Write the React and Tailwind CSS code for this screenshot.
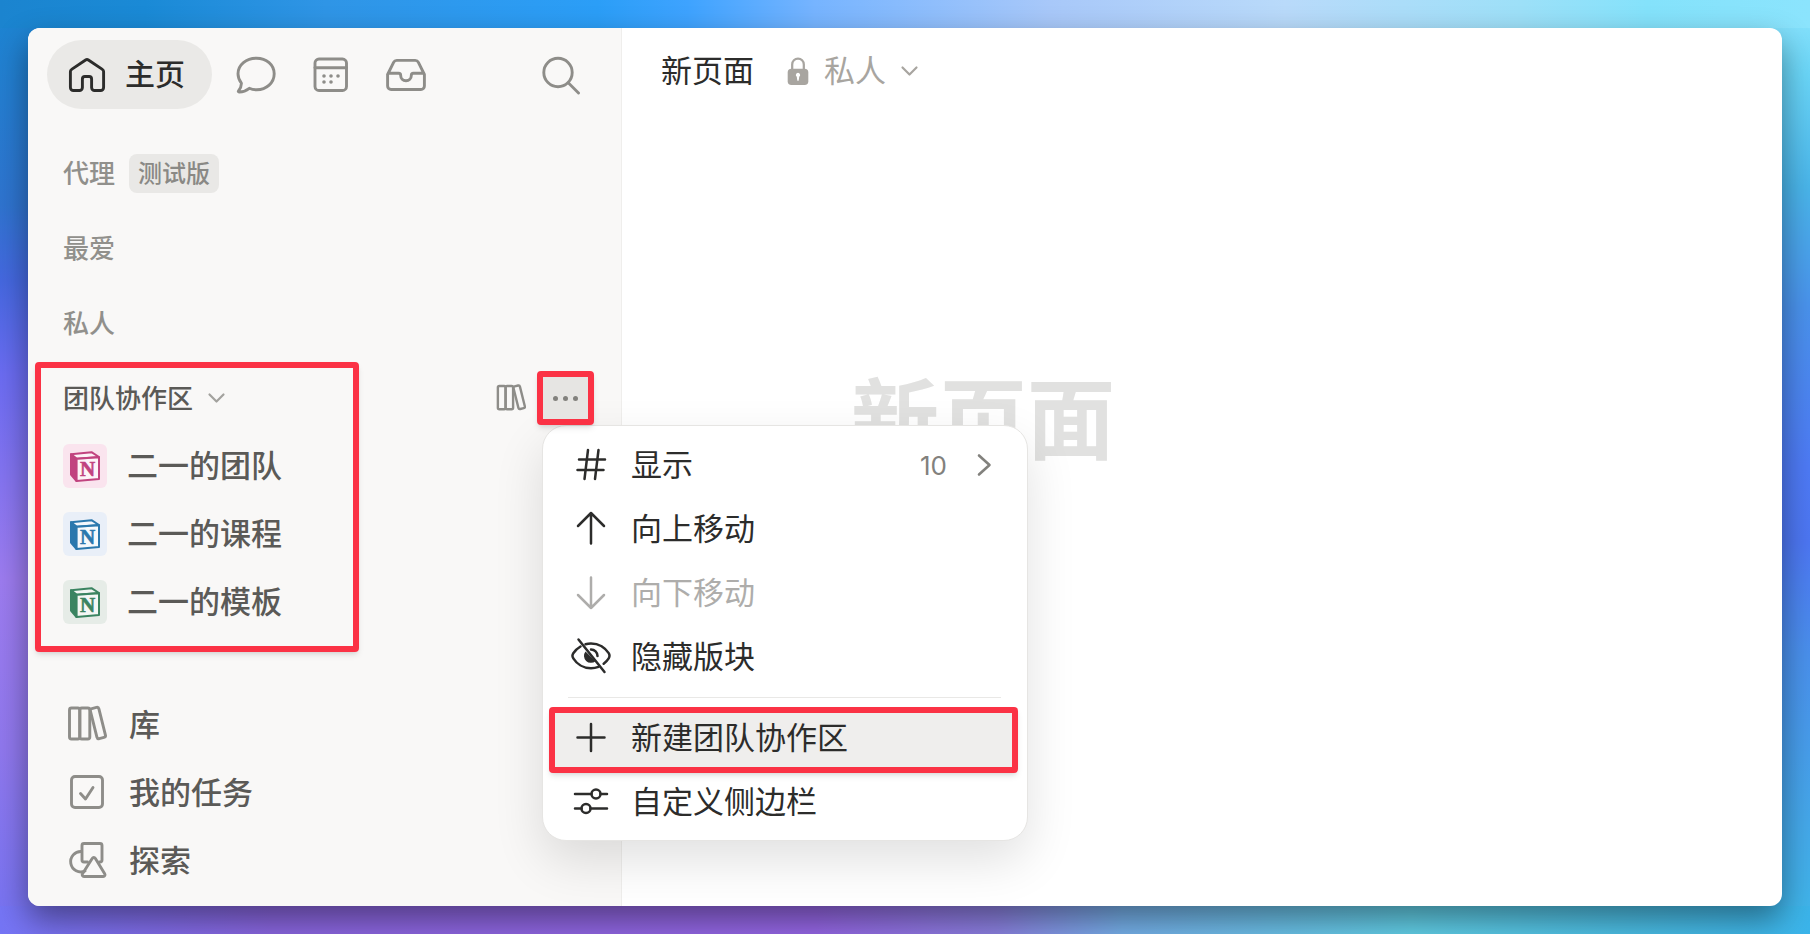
import { useState } from "react";

const Icon = ({ children, className = "size-10", strokeWidth = 2.9 }) => (
  <svg
    className={`shrink-0 ${className}`}
    viewBox="0 0 40 40"
    fill="none"
    stroke="currentColor"
    strokeWidth={strokeWidth}
    strokeLinecap="round"
    strokeLinejoin="round"
    aria-hidden="true"
  >
    {children}
  </svg>
);

const HomeIcon = () => (
  <Icon>
    <path d="M18.600 5 4.600 14.400a2.500 2.500 0 0 0-1.200 2.100V32.500a3 3 0 0 0 3 3h6a3 3 0 0 0 3-3V24a2.500 2.500 0 0 1 2.500-2.500h4.200a2.500 2.500 0 0 1 2.500 2.500v8.500a3 3 0 0 0 3 3h6a3 3 0 0 0 3-3V16.500a2.500 2.500 0 0 0-1.200-2.100L21.400 5a2.500 2.500 0 0 0-2.800 0Z" />
  </Icon>
);

const ChatIcon = () => (
  <Icon>
    <path d="M20.500 3.200C30.500 3.200 38.200 9.800 38.200 18.800c0 9-7.700 16-17.400 16-2.800 0-5.300-.5-7.500-1.500-2.500 2-6 3.800-10.300 3.700-.7 0-.9-.7-.5-1.200 1.500-1.900 3-4.700 2.900-7.700C3.300 25.500 2 22.400 2 18.800 2 9.800 10.300 3.200 20.500 3.200Z" />
  </Icon>
);

const CalendarIcon = () => (
  <Icon>
    <rect x="4" y="4" width="31.500" height="31.500" rx="4" />
    <path d="M4 12.800h31.500" />
    <g fill="currentColor" stroke="none">
      <circle cx="13" cy="21" r="1.800" />
      <circle cx="20" cy="21" r="1.800" />
      <circle cx="27" cy="21" r="1.800" />
      <circle cx="13" cy="27" r="1.800" />
      <circle cx="20" cy="27" r="1.800" />
    </g>
  </Icon>
);

const InboxIcon = () => (
  <Icon>
    <path d="M1.600 19.500 7.600 7.400a3.600 3.600 0 0 1 3.200-2h18.400a3.600 3.600 0 0 1 3.200 2l6 12.100V31a3.500 3.500 0 0 1-3.500 3.500H5.100A3.500 3.500 0 0 1 1.600 31V19.500a1.500 1.500 0 0 1 1.500-1.200h9.500c1.200 0 2.100 1 2.100 2.200 0 2.900 2.200 5.200 5.300 5.200s5.300-2.300 5.300-5.200c0-1.200.9-2.200 2.100-2.200h9.500a1.500 1.500 0 0 1 1.500 1.200" />
  </Icon>
);

const SearchIcon = () => (
  <Icon>
    <circle cx="17" cy="17.500" r="14.200" />
    <path d="m27.500 28 10 10" />
  </Icon>
);

const LibraryIcon = ({ className, strokeWidth }) => (
  <Icon className={className} strokeWidth={strokeWidth}>
    <rect x="2.500" y="4" width="10.300" height="31" rx="2" />
    <rect x="12.800" y="4" width="10" height="31" rx="2" />
    <rect x="26.500" y="3.500" width="8.800" height="31" rx="2" transform="rotate(-14 30.900 19)" />
  </Icon>
);

const TaskIcon = () => (
  <Icon>
    <rect x="4.500" y="4.500" width="31" height="31" rx="3.500" />
    <path d="m13.500 21.500 5 5.500 7.500-11.500" />
  </Icon>
);

const ExploreIcon = () => (
  <Icon>
    <path d="M14.500 11.500A10.200 10.200 0 1 0 18 31" />
    <path d="M20.500 22h-3.500a2 2 0 0 1-2-2V5.500a2 2 0 0 1 2-2h16a2 2 0 0 1 2 2V20a2 2 0 0 1-2 2h-.5" />
    <path d="M25.200 18.500c.8-1.300 2.400-1.300 3.200 0l9.300 15.200c.8 1.300 0 2.800-1.500 2.800H17c-1.500 0-2.300-1.500-1.500-2.800Z" />
  </Icon>
);

const ChevronDown = () => (
  <svg className="size-5" viewBox="0 0 20 20" fill="none" stroke="currentColor" strokeWidth="2.200" strokeLinecap="round" strokeLinejoin="round" aria-hidden="true">
    <path d="m2.500 6.500 7 7 7-7" />
  </svg>
);

const LockIcon = () => (
  <svg className="h-[30px] w-6" viewBox="0 0 24 32" aria-hidden="true">
    <path d="M5.800 15V9a6.200 6.200 0 0 1 12.400 0V15" fill="none" stroke="currentColor" strokeWidth="2.400" />
    <rect x="1" y="13.500" width="22" height="17.500" rx="4" fill="currentColor" />
    <path d="M12 18a2.300 2.300 0 0 0-1.300 4.200l.6 4.300h1.400l.6-4.300A2.300 2.300 0 0 0 12 18Z" fill="#fff" />
  </svg>
);

const CubeLogo = () => (
  <svg className="size-11" viewBox="0 0 44 44" aria-hidden="true">
    <path d="M8 10.200 28.500 8.200 36 13 13.500 14.800Z" fill="#fff" fillOpacity="0.5" stroke="currentColor" strokeWidth="2" strokeLinejoin="round" />
    <path d="M8 10.200 13.500 14.800V37L8 30.500Z" fill="currentColor" stroke="currentColor" strokeWidth="2" strokeLinejoin="round" />
    <path d="M13.500 14.800 36 13.200V35L13.500 37Z" fill="#fff" fillOpacity="0.6" stroke="currentColor" strokeWidth="2" strokeLinejoin="round" />
    <text x="24.500" y="32" textAnchor="middle" fill="currentColor" stroke="currentColor" strokeWidth="0.600" className="font-['Liberation_Serif',serif] text-[21px] font-bold">
      N
    </text>
  </svg>
);

const tabs = [
  { label: "聊天", icon: ChatIcon },
  { label: "日历", icon: CalendarIcon },
  { label: "收件箱", icon: InboxIcon },
];

const teams = [
  { name: "二一的团队", color: "bg-[#fae4ee] text-[#c1437f]" },
  { name: "二一的课程", color: "bg-[#e9eff8] text-[#2b78ad]" },
  { name: "二一的模板", color: "bg-[#e6ece7] text-[#3b8461]" },
];

const links = [
  { name: "库", icon: LibraryIcon },
  { name: "我的任务", icon: TaskIcon },
  { name: "探索", icon: ExploreIcon },
];

const sectionClass = "flex h-[68px] items-center pl-[35px]";
const sectionTextClass = "pb-1 text-[26px] font-medium";
const rowClass = "flex h-[68px] w-full items-center gap-5 text-[31px] font-medium text-[#5b5a57]";
const markClass = "pointer-events-none absolute rounded-[4px] border-6 border-[#fb3245]";

const MenuItem = ({ icon, label, value, disabled, marked }) => (
  <button
    type="button"
    role="menuitem"
    disabled={disabled}
    className={`relative isolate ml-[6px] mr-[9px] flex h-16 items-center gap-5 pl-[22px] pr-[26px] text-[31px] ${disabled ? "text-[#aeadab]" : "text-[#2c2c2b]"}`}
  >
    {marked && <span className={`${markClass} inset-x-0 top-px -bottom-[3px] -z-10 bg-[#efeeed] shadow-md`} />}
    <Icon strokeWidth={2.5}>{icon}</Icon>
    <span className="pb-1">{label}</span>
    {value && (
      <span className="ml-auto flex items-center gap-[29px] font-['Inter',sans-serif] text-[26px] text-[#82817d]">
        {value}
        <svg className="h-6 w-4" viewBox="0 0 16 24" fill="none" stroke="currentColor" strokeWidth="2.600" strokeLinecap="round" strokeLinejoin="round" aria-hidden="true">
          <path d="m3 2.500 10.500 9.500L3 21.500" />
        </svg>
      </span>
    )}
  </button>
);

const SectionMenu = () => (
  <div
    role="menu"
    className="absolute left-[5px] top-[54px] flex w-[486px] flex-col rounded-3xl border border-[#e6e5e3] bg-white pb-[6px] pt-[7px] shadow-[0_20px_50px_rgba(0,0,0,0.12)]"
  >
    <MenuItem label="显示" value="10" icon={<path d="M17 5 13.500 34M27.500 5 24 34M8 14.500h26M6.500 25h26" />} />
    <MenuItem label="向上移动" icon={<path d="M20 34.500V4M7 17 20 4l13 13" />} />
    <MenuItem label="向下移动" disabled icon={<path d="M20 4.500V35M7 22l13 13 13-13" />} />
    <MenuItem
      label="隐藏版块"
      icon={
        <>
          <path d="M14.500 7.200A19 19 0 0 1 20 6.400c8 0 14.500 4.800 17.700 9.800 1 1.600 1 3.500 0 5.100a21 21 0 0 1-5 5.400M9.500 9.500a22 22 0 0 0-7.200 6.700 4.600 4.600 0 0 0 0 5.100C5.500 26.400 12 31.200 20 31.200c2.700 0 5.200-.5 7.500-1.400" />
          <path d="M14.500 14.500a7 7 0 0 0 10 9.700Z" fill="currentColor" stroke="none" />
          <path d="M20 12.500a6.500 6.500 0 0 1 6.500 6.500" />
          <path d="m7.500 2.500 26 32.500" />
        </>
      }
    />
    <hr className="my-2 ml-[25px] mr-[26px] border-[#e9e8e6]" />
    <MenuItem label="新建团队协作区" marked icon={<path d="M20 6v27M6.500 19.500h27" />} />
    <MenuItem
      label="自定义侧边栏"
      icon={
        <>
          <path d="M4 12h16.500M29.500 12h6.500M4 26.500h6.500M19.500 26.500H36" />
          <circle cx="25" cy="12" r="4.500" />
          <circle cx="15" cy="26.500" r="4.500" />
        </>
      }
    />
  </div>
);

const Sidebar = () => {
  const [menuOpen, setMenuOpen] = useState(true);

  return (
    <aside className="relative z-10 w-[594px] shrink-0 border-r border-[#efeeec] bg-[#f9f8f7] pt-3">
      <nav className="flex h-[69px] items-center pl-[19px] pr-[23px] text-[#8e8d89]">
        <button type="button" className="mr-[6px] flex h-full items-center gap-[18px] rounded-full bg-[#eae9e7] pl-5 pr-[27px] text-[30px] font-medium text-[#2c2c2b]">
          <HomeIcon />
          <span className="pb-1">主页</span>
        </button>
        {tabs.map(({ label, icon: TabIcon }) => (
          <button key={label} type="button" aria-label={label} className="flex h-full w-[75px] items-center justify-center">
            <TabIcon />
          </button>
        ))}
        <button type="button" aria-label="搜索" className="ml-auto flex h-full w-[75px] items-center justify-center">
          <SearchIcon />
        </button>
      </nav>

      <div className="mt-[30px] flex flex-col gap-[7px]">
        <div className={`${sectionClass} gap-[14px]`}>
          <h2 className={`${sectionTextClass} text-[#91908c]`}>代理</h2>
          <span className="flex h-[39px] items-center rounded-lg bg-[#e9e8e6] px-[9px] pb-[2px] text-[24px] font-medium text-[#8a8985]">测试版</span>
        </div>
        <div className={sectionClass}>
          <h2 className={`${sectionTextClass} text-[#91908c]`}>最爱</h2>
        </div>
        <div className={sectionClass}>
          <h2 className={`${sectionTextClass} text-[#91908c]`}>私人</h2>
        </div>

        <section className="relative">
          <div className={`${sectionClass} pr-[27px]`}>
            <button type="button" className="flex items-center gap-[14px] text-[#a3a29e]">
              <span className={`${sectionTextClass} text-[#5b5a57]`}>团队协作区</span>
              <ChevronDown />
            </button>
            <button type="button" aria-label="浏览团队协作区" className="ml-auto mr-[11px] text-[#8e8d89]">
              <LibraryIcon className="size-[30px]" strokeWidth={3.2} />
            </button>
            <div className="relative">
              <button
                type="button"
                aria-label="更多"
                aria-expanded={menuOpen}
                onClick={() => setMenuOpen(!menuOpen)}
                className="relative z-10 flex h-[54px] w-[57px] items-center justify-center gap-[5px] rounded-[4px] border-6 border-[#fb3245] bg-[#e6e5e3] shadow-md"
              >
                <span className="size-[5px] rounded-full bg-[#82817d]" />
                <span className="size-[5px] rounded-full bg-[#82817d]" />
                <span className="size-[5px] rounded-full bg-[#82817d]" />
              </button>
              {menuOpen && <SectionMenu />}
            </div>
          </div>
          <ul>
            {teams.map((team) => (
              <li key={team.name} className="pl-[35px] pr-[270px]">
                <button type="button" className={rowClass}>
                  <span className={`rounded-md ${team.color}`}>
                    <CubeLogo />
                  </span>
                  <span className="pb-1">{team.name}</span>
                </button>
              </li>
            ))}
          </ul>
          <div className={`${markClass} -bottom-4 -top-[2px] left-[7px] w-[324px] shadow-md`} />
        </section>
      </div>

      <ul className="mt-[54px] pb-3">
        {links.map(({ name, icon: LinkIcon }) => (
          <li key={name} className="pl-[37px] pr-[270px]">
            <button type="button" className={rowClass}>
              <span className="flex w-11 justify-center text-[#8e8d89]">
                <LinkIcon />
              </span>
              <span className="pb-[2px]">{name}</span>
            </button>
          </li>
        ))}
      </ul>
    </aside>
  );
};

const App = () => {
  return (
    <div className="flex min-h-screen p-7 font-['Noto_Sans_CJK_SC',sans-serif] [background:linear-gradient(90deg,#1b84cf,#1a8ad6_8%,#2f95e6_18%,#2b9ef7_33%,#3ea3ff_38%,#76b4ff_45%,#a8c8f9_58%,#b9dafa_71%,#9de0f8_84%,#84e2fb_91%,#8be4fd)_top/100%_28px_no-repeat,linear-gradient(90deg,#7575f5,#8a66e0_15%,#9566e5_45%,#8b80e0_55%,#76b0ea_62%,#62d0e8_78%,#4cbfe6_90%,#3bb4ea)_bottom/100%_28px_no-repeat,linear-gradient(#1b86d2,#2f74d0_22%,#4568e0_30%,#6b6cf2_40%,#9d7cf0_62%,#9078ee_80%,#7573f2)_left/50%_100%_no-repeat,linear-gradient(#8fe5fd,#6ad6f8_8%,#4ab5ea_20%,#4a92ec_33%,#4e7af5_50%,#4d76f2_58%,#4a90ec_70%,#45a8ea_88%,#3fb8ea)_right/50%_100%_no-repeat]">
      <div className="flex flex-1 overflow-hidden rounded-xl bg-white shadow-[0_14px_32px_rgba(0,0,0,0.42)]">
        <Sidebar />
        <main className="min-w-0 flex-1">
          <header className="flex h-[86px] items-center pl-[39px] text-[31px]">
            <span className="pb-1 text-[#2c2c2b]">新页面</span>
            <button type="button" className="ml-8 flex items-center gap-[14px] text-[#a8a5a0]">
              <LockIcon />
              <span className="pb-1">私人</span>
              <ChevronDown />
            </button>
          </header>
          <h1 className="mt-[256px] pl-[229px] text-[88px] font-bold leading-none text-[#e1e1e0]">新页面</h1>
        </main>
      </div>
    </div>
  );
};

export default App;
